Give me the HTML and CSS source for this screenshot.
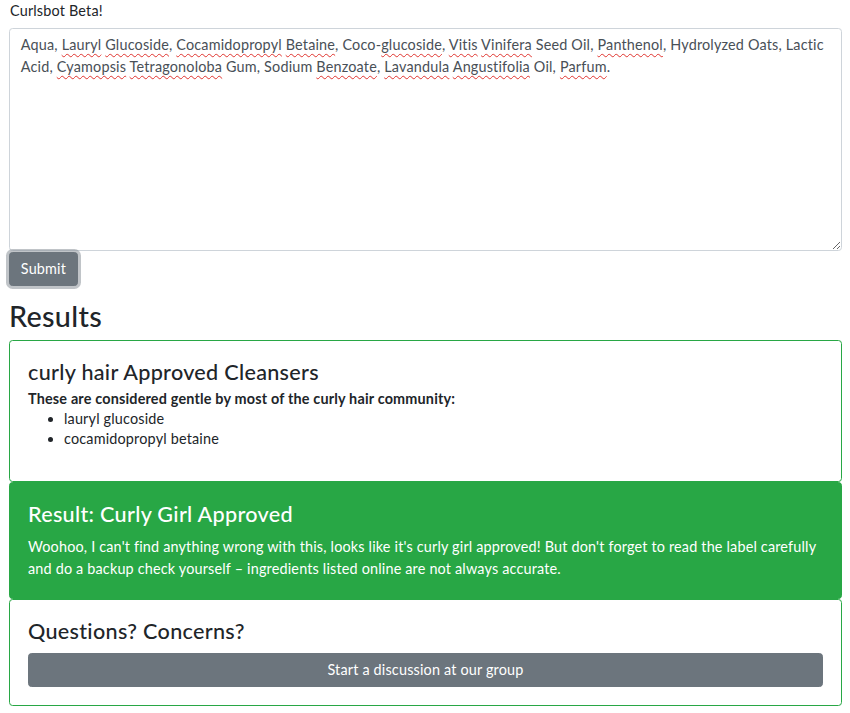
FILE: index.html
```html
<!DOCTYPE html>
<html lang="en">
<head>
<meta charset="utf-8">
<title>Curlsbot Beta!</title>
<link rel="stylesheet" href="styles.css">
</head>
<body>
<div class="page">
  <div class="brand">Curlsbot Beta!</div>
  <form class="query">
    <div class="ingredients" role="textbox" aria-multiline="true">Aqua, <span class="sp">Lauryl</span> <span class="sp">Glucoside</span>, <span class="sp">Cocamidopropyl</span> <span class="sp">Betaine</span>, Coco-<span class="sp">glucoside</span>, <span class="sp">Vitis</span> <span class="sp">Vinifera</span> Seed Oil, <span class="sp">Panthenol</span>, Hydrolyzed Oats, Lactic Acid, <span class="sp">Cyamopsis</span> <span class="sp">Tetragonoloba</span> Gum, Sodium <span class="sp">Benzoate</span>, <span class="sp">Lavandula</span> <span class="sp">Angustifolia</span> Oil, <span class="sp">Parfum</span>.</div>
    <button type="button" class="btn btn-submit">Submit</button>
  </form>
  <h2 class="results-title">Results</h2>
  <div class="card">
    <div class="card-body">
      <h4 class="card-title tight">curly hair Approved Cleansers</h4>
      <p class="card-lead">These are considered gentle by most of the curly hair community:</p>
      <ul class="card-list">
        <li>lauryl glucoside</li>
        <li>cocamidopropyl betaine</li>
      </ul>
    </div>
  </div>
  <div class="card card-success">
    <div class="card-body">
      <h4 class="card-title">Result: Curly Girl Approved</h4>
      <p class="card-text">Woohoo, I can't find anything wrong with this, looks like it's curly girl approved! But don't forget to read the label carefully and do a backup check yourself – ingredients listed online are not always accurate.</p>
    </div>
  </div>
  <div class="card">
    <div class="card-body">
      <h4 class="card-title">Questions? Concerns?</h4>
      <button type="button" class="btn btn-block">Start a discussion at our group</button>
    </div>
  </div>
</div>
</body>
</html>
```

FILE: styles.css
```css
* { box-sizing: border-box; }

html, body {
  margin: 0;
  padding: 0;
  background: #fff;
}

body {
  font-family: Lato, "Noto Sans", "Liberation Sans", sans-serif;
  font-size: 14.4px;
  line-height: 21.6px;
  letter-spacing: 0.18px;
  color: #212529;
}

.page {
  padding: 0 8px 0 9px;
}

.brand {
  padding-left: 1px;
  line-height: 22px;
  margin-bottom: 6px;
}

.query {
  margin: 0 0 13px;
}

.ingredients {
  display: block;
  width: 100%;
  height: 223px;
  padding: 5.4px 10.8px;
  border: 1px solid #ced4da;
  border-radius: 3.6px;
  color: #495057;
  background: #fff;
  overflow: auto;
  resize: both;
}

.sp {
  text-decoration: underline wavy #e0332e;
  text-decoration-thickness: 1px;
  text-underline-offset: 3px;
  text-decoration-skip-ink: none;
}

.btn {
  display: inline-block;
  font-family: inherit;
  font-size: 14.4px;
  line-height: 21.6px;
  letter-spacing: 0.18px;
  padding: 5.4px 10.8px;
  border: 1px solid #6c757d;
  border-radius: 3.6px;
  background: #6c757d;
  color: #fff;
  text-align: center;
  cursor: pointer;
}

.btn-submit {
  margin-top: 1px;
  box-shadow: 0 0 0 3px rgba(130, 138, 145, 0.5);
}

.btn-block {
  display: block;
  width: 100%;
}

.results-title {
  margin: 0 0 7px;
  font-size: 28.8px;
  line-height: 34px;
  font-weight: 500;
  letter-spacing: 0.3px;
}

.card {
  border: 1px solid #28a745;
  border-radius: 3.6px;
  background: #fff;
}

.card-body {
  padding: 18px;
}

.card-title {
  margin: 0 0 9px;
  font-size: 21.6px;
  line-height: 26px;
  font-weight: 500;
  letter-spacing: 0.3px;
}

.card-title.tight {
  margin-bottom: 4px;
}

.card-lead {
  margin: 0;
  font-weight: 700;
  line-height: 20px;
}

.card-list {
  margin: 0 0 14px;
  padding-left: 36px;
  line-height: 20px;
}

.card-success {
  background: #28a745;
  color: #fff;
}

.card-text {
  margin: 0;
}
```
